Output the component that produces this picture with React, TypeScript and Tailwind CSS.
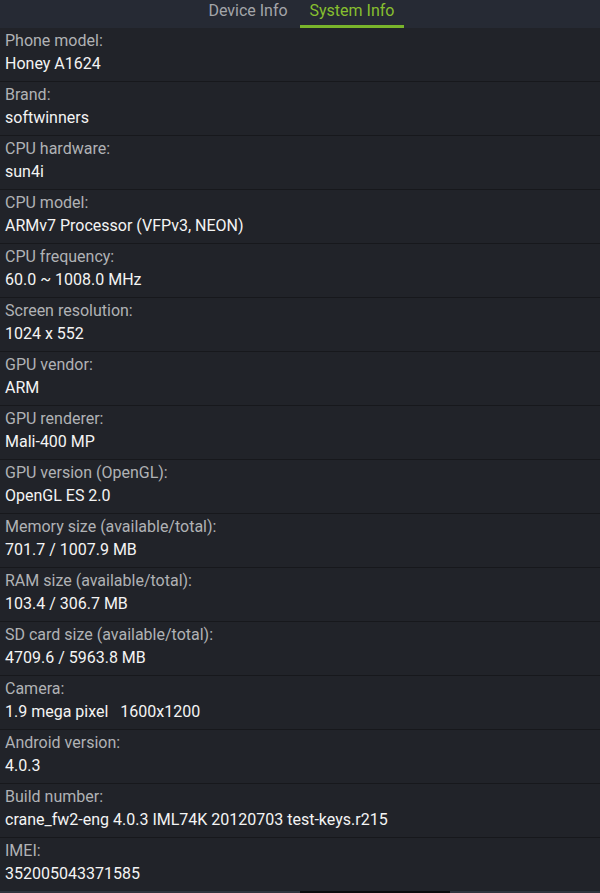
import React from "react";

const rows: [string, string][] = [
  ["Phone model:", "Honey A1624"],
  ["Brand:", "softwinners"],
  ["CPU hardware:", "sun4i"],
  ["CPU model:", "ARMv7 Processor (VFPv3, NEON)"],
  ["CPU frequency:", "60.0 ~ 1008.0 MHz"],
  ["Screen resolution:", "1024 x 552"],
  ["GPU vendor:", "ARM"],
  ["GPU renderer:", "Mali-400 MP"],
  ["GPU version (OpenGL):", "OpenGL ES 2.0"],
  ["Memory size (available/total):", "701.7 / 1007.9 MB"],
  ["RAM size (available/total):", "103.4 / 306.7 MB"],
  ["SD card size (available/total):", "4709.6 / 5963.8 MB"],
  ["Camera:", "1.9 mega pixel   1600x1200"],
  ["Android version:", "4.0.3"],
  ["Build number:", "crane_fw2-eng 4.0.3 IML74K 20120703 test-keys.r215"],
  ["IMEI:", "352005043371585"],
];

export default function App() {
  return (
    <div
      className="w-[600px] h-[893px] bg-[#212329] overflow-hidden flex flex-col"
      style={{ fontFamily: "Roboto, 'Liberation Sans', sans-serif" }}
    >
      <div className="h-[28px] bg-[#262a34] flex justify-center shrink-0">
        <div className="w-[104px] flex justify-center pt-[1px] text-[16px] text-[#a3a5a9] leading-[20px]">
          Device Info
        </div>
        <div className="w-[104px] flex flex-col items-center">
          <div className="pt-[1px] text-[16px] text-[#86bf2f] leading-[20px] h-[25px]">
            System Info
          </div>
          <div className="h-[3px] w-full bg-[#79b42b]" />
        </div>
      </div>
      <div className="flex flex-col">
        {rows.map(([label, value], i) => (
          <div
            key={i}
            className="h-[54px] shrink-0 flex flex-col border-b border-[#17181c] px-[5px]"
          >
            <div className="pt-[2px] text-[16px] leading-[22px] text-[#b0b2b5] whitespace-pre">
              {label}
            </div>
            <div className="pt-[1px] text-[16px] leading-[22px] text-[#f4f4f4] whitespace-pre">
              {value}
            </div>
          </div>
        ))}
      </div>
      <div className="h-[2px] flex shrink-0 -mt-[1px]">
        <div className="w-[300px] bg-[#31353f]" />
        <div className="w-[150px] bg-[#0c0c0e]" />
        <div className="flex-1 bg-[#31353f]" />
      </div>
    </div>
  );
}
